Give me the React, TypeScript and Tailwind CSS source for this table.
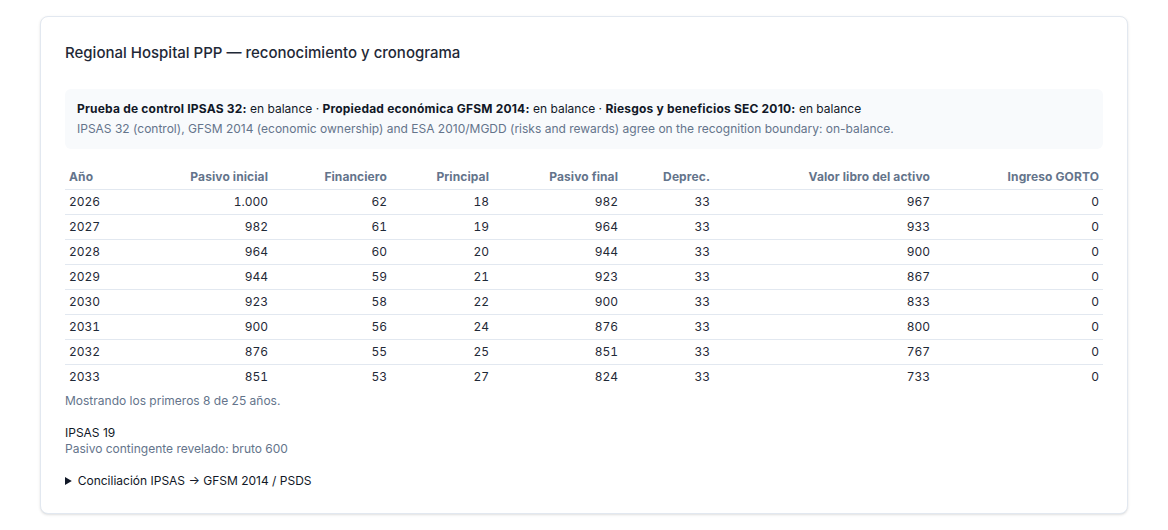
import React from 'react';

const rows = [
  [2026, '1.000', 62, 18, 982, 33, 967, 0],
  [2027, '982', 61, 19, 964, 33, 933, 0],
  [2028, '964', 60, 20, 944, 33, 900, 0],
  [2029, '944', 59, 21, 923, 33, 867, 0],
  [2030, '923', 58, 22, 900, 33, 833, 0],
  [2031, '900', 56, 24, 876, 33, 800, 0],
  [2032, '876', 55, 25, 851, 33, 767, 0],
  [2033, '851', 53, 27, 824, 33, 733, 0],
];

const headers = [
  { label: 'Año', w: 'w-[80px]', align: 'text-left' },
  { label: 'Pasivo inicial', w: 'w-[127px]', align: 'text-right' },
  { label: 'Financiero', w: 'w-[119px]', align: 'text-right' },
  { label: 'Principal', w: 'w-[102px]', align: 'text-right' },
  { label: 'Pasivo final', w: 'w-[129px]', align: 'text-right' },
  { label: 'Deprec.', w: 'w-[92px]', align: 'text-right' },
  { label: 'Valor libro del activo', w: 'w-[220px]', align: 'text-right' },
  { label: 'Ingreso GORTO', w: 'w-[169px]', align: 'text-right' },
];

export default function App() {
  return (
    <div className="min-h-screen bg-white px-10 pt-4 font-['Inter',sans-serif] text-[#111827]">
      <div className="rounded-lg border border-[#e2e8f0] bg-white p-6 shadow-sm">
        <h2 className="text-[15px] font-medium leading-6 text-[#1f2937]">
          Regional Hospital PPP — reconocimiento y cronograma
        </h2>

        <div className="mt-6 rounded-md bg-[#f8fafc] px-3 py-2.5 text-[12px] leading-5">
          <div className="text-[#111827]">
            <b className="font-bold tracking-[0.2px]">Prueba de control IPSAS 32:</b> en balance ·{' '}
            <b className="font-bold tracking-[0.2px]">Propiedad económica GFSM 2014:</b> en balance ·{' '}
            <b className="font-bold tracking-[0.2px]">Riesgos y beneficios SEC 2010:</b> en balance
          </div>
          <div className="text-[#64748b]">
            IPSAS 32 (control), GFSM 2014 (economic ownership) and ESA 2010/MGDD (risks and rewards) agree on the recognition boundary: on-balance.
          </div>
        </div>

        <table className="mt-4 w-full table-fixed border-collapse text-[12px] leading-4">
          <thead>
            <tr className="border-b border-[#e2e8f0]">
              {headers.map((h) => (
                <th key={h.label} className={`${h.w} ${h.align} px-1 py-1 font-bold tracking-[0.1px] text-[#64748b]`}>
                  {h.label}
                </th>
              ))}
            </tr>
          </thead>
          <tbody>
            {rows.map((r, i) => (
              <tr key={r[0]} className={i < rows.length - 1 ? 'border-b border-[#e2e8f0]' : ''}>
                {r.map((c, j) => (
                  <td key={j} className={`px-1 py-1 tabular-nums text-[#1f2937] ${j === 0 ? 'text-left' : 'text-right'}`}>
                    {c}
                  </td>
                ))}
              </tr>
            ))}
          </tbody>
        </table>

        <p className="mt-1 text-[12px] leading-4 text-[#64748b]">Mostrando los primeros 8 de 25 años.</p>

        <div className="mt-4 text-[12px] leading-4">
          <div className="text-[#111827]">IPSAS 19</div>
          <div className="text-[#64748b]">Pasivo contingente revelado: bruto 600</div>
        </div>

        <details className="mt-4 text-[12px] leading-4 text-[#111827]">
          <summary className="cursor-pointer">Conciliación IPSAS → GFSM 2014 / PSDS</summary>
        </details>
      </div>
    </div>
  );
}
